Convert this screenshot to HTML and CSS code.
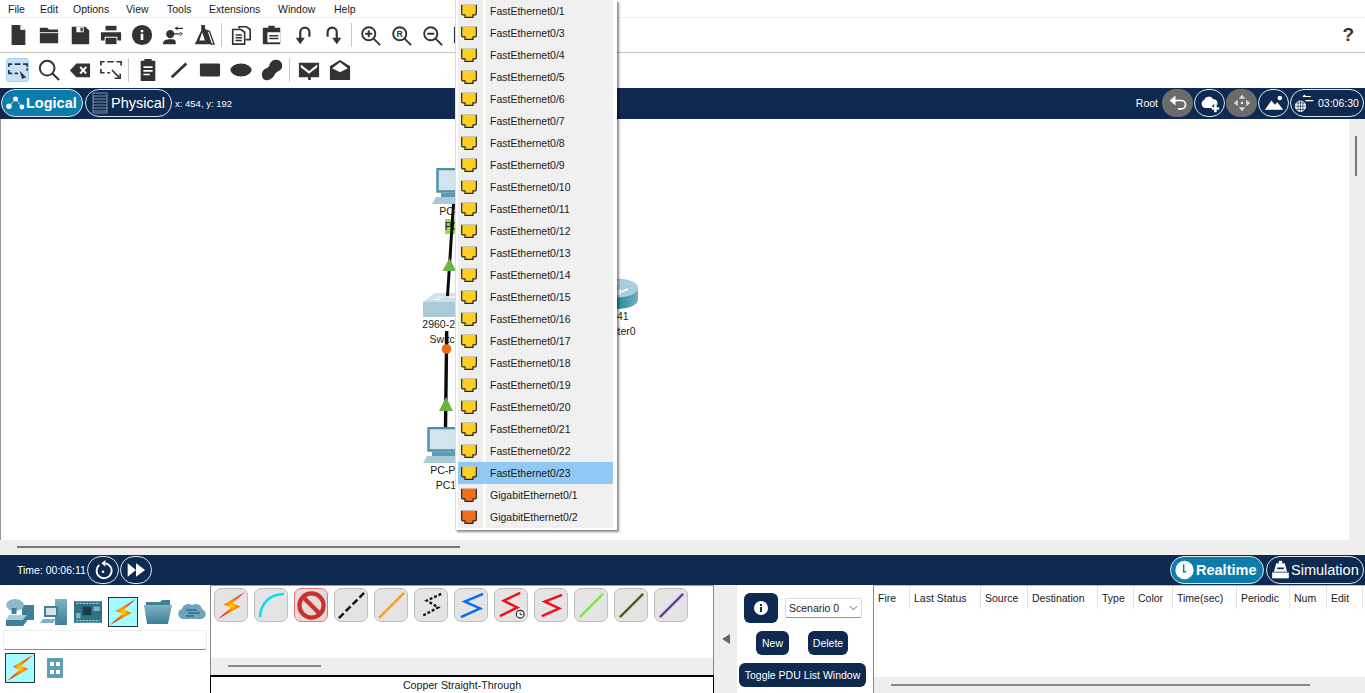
FILE: index.html
```html
<!DOCTYPE html>
<html lang="en">
<head>
    <meta charset="UTF-8">
    <meta name="viewport" content="width=device-width, initial-scale=1.0">
    <title>Cisco Packet Tracer</title>
    <link rel="stylesheet" href="styles.css">
</head>
<body>
    <svg class="defs" width="0" height="0">
        <defs>
            <radialGradient id="boltFill" cx="50%" cy="50%" r="50%">
                <stop offset="0%" stop-color="#ffd800"/>
                <stop offset="35%" stop-color="#ff8a00"/>
                <stop offset="100%" stop-color="#ee1c0c"/>
            </radialGradient>
            <linearGradient id="tealFill" x1="0" y1="0" x2="0" y2="1">
                <stop offset="0%" stop-color="#7fb2c4"/>
                <stop offset="100%" stop-color="#3f7f98"/>
            </linearGradient>
            <linearGradient id="routerFill" x1="0" y1="0" x2="1" y2="0">
                <stop offset="0%" stop-color="#9cc4d2"/>
                <stop offset="55%" stop-color="#2f8da0"/>
                <stop offset="100%" stop-color="#6fb0bf"/>
            </linearGradient>
            <symbol id="port" viewBox="0 0 16 14">
                <path d="M.7 0V9.800Q.7 10.800 1.700 10.800H4V13.300H12V10.800H14.300Q15.300 10.800 15.300 9.800V0Z" fill="currentColor" stroke="#2a2418" stroke-width="1.200"/>
                <path d="M0 0H16V.8H0Z" fill="#d8d8d8"/>
            </symbol>
            <symbol id="bolt" viewBox="0 0 30 30">
                <path d="M29 1 7 14 14.500 17 1 29 24 16 16 12.500Z" fill="url(#boltFill)"/>
            </symbol>
            <symbol id="pc" viewBox="0 0 46 36">
                <path d="M5.500 1H42.500V23.500H5.500Z" fill="#d4e4ec" stroke="#4f8ea8" stroke-width="2.400"/>
                <path d="M9 25H39V29H9Z" fill="#5b9ab0"/>
                <path d="M4 29H42L46 36H0Z" fill="#a9cbd8"/>
            </symbol>
        </defs>
    </svg>

    <div class="app">
        <nav class="menubar">
            <span>File</span><span>Edit</span><span>Options</span><span>View</span>
            <span>Tools</span><span>Extensions</span><span>Window</span><span>Help</span>
        </nav>

        <div class="toolbar toolbar-main">
            <button class="tool"><svg viewBox="0 0 24 24"><path d="M5 1H15L20 6V23H5Z"/><path d="M15 1V6H20" fill="#fff" stroke="#fff" stroke-width=".8"/></svg></button>
            <button class="tool"><svg viewBox="0 0 24 24"><path d="M2 4H10L12 6H22V9H2Z"/><path d="M2 10H22V21H2Z"/></svg></button>
            <button class="tool"><svg viewBox="0 0 24 24"><path d="M3 3H18L22 7V22H3Z"/><path d="M8 3H16V9H8Z" fill="#fff"/><path d="M12.500 4H15V8H12.500Z"/></svg></button>
            <button class="tool"><svg viewBox="0 0 24 24"><path d="M6 2H18V7H6Z"/><path d="M1 9H23V18H19V14H5V18H1Z"/><path d="M6 15H18V22H6Z"/></svg></button>
            <button class="tool"><svg viewBox="0 0 24 24"><circle cx="12" cy="12" r="11"/><path d="M10.600 6.500H13.400V9H10.600ZM10.600 10.500H13.400V17.500H10.600Z" fill="#fff"/></svg></button>
            <button class="tool"><svg viewBox="0 0 24 24"><circle cx="9" cy="11" r="4.500"/><path d="M1 22C1 17 5 16.500 9 16.500S15 17 15 20V22Z"/><path d="M14 4H23V5.500H14ZM14 4.700 17 2.500V7ZM13 10H21V11.500H13ZM23 10.700 19.500 8.500V13Z"/></svg></button>
            <button class="tool"><svg viewBox="0 0 24 24"><path d="M9 1H13V4L21 22H2L9 7Z"/><path d="M10 9 7 18H13Z" fill="#fff"/><path d="M15 7 18 8 23 22H20Z" fill="#fff" stroke="#333" stroke-width="1.400"/></svg></button>
            <span class="sep"></span>
            <button class="tool"><svg viewBox="0 0 24 24" fill="none" stroke="#333" stroke-width="1.800"><path d="M10 5V3H18L22 6V17H17"/><path d="M3 6H12L16 9V22H3Z" fill="#fff"/><path d="M6 12H13M6 15H13M6 18H13"/></svg></button>
            <button class="tool"><svg viewBox="0 0 24 24"><path d="M2 4H8V2H15V4H21V22H2Z"/><path d="M7 9H21V20H7Z" fill="#fff"/><path d="M9 12H19V13.500H9ZM9 15H19V16.500H9Z"/></svg></button>
            <button class="tool"><svg viewBox="0 0 24 24" fill="none" stroke="#333" stroke-width="2.400"><path d="M19 14V9A5 5 0 0 0 9 9V17"/><path d="M4 15 9 22 14 15Z" fill="#333" stroke="none"/></svg></button>
            <button class="tool"><svg viewBox="0 0 24 24" fill="none" stroke="#333" stroke-width="2.400"><path d="M5 14V9A5 5 0 0 1 15 9V17"/><path d="M10 15 15 22 20 15Z" fill="#333" stroke="none"/></svg></button>
            <span class="sep"></span>
            <button class="tool tool-zoom"><svg viewBox="0 0 24 24" fill="none" stroke="#333" stroke-width="2.200"><circle cx="10" cy="10" r="7.500"/><path d="M15.500 15.500 23 23M6 10H14M10 6V14"/></svg></button>
            <button class="tool tool-zoom"><svg viewBox="0 0 24 24" fill="none" stroke="#333" stroke-width="2.200"><circle cx="10" cy="10" r="7.500"/><path d="M15.500 15.500 23 23"/><text x="10" y="13.500" text-anchor="middle" class="icon-letter">R</text></svg></button>
            <button class="tool tool-zoom"><svg viewBox="0 0 24 24" fill="none" stroke="#333" stroke-width="2.200"><circle cx="10" cy="10" r="7.500"/><path d="M15.500 15.500 23 23M6 10H14"/></svg></button>
            <button class="tool"><svg viewBox="0 0 24 24"><path d="M1 3H9V21H1Z"/></svg></button>
            <span class="help">?</span>
        </div>

        <div class="toolbar toolbar-edit">
            <button class="tool tool-on"><svg viewBox="0 0 24 24" fill="none" stroke="#333" stroke-width="2"><path d="M1 8V5H5M8 5H15M18 5H23V8M1 12V16H5M8 16H12"/><path d="M14 13 22 21 19 21.500 17 23Z" fill="#333" stroke="none"/><path d="M23 10V13"/></svg></button>
            <button class="tool"><svg viewBox="0 0 24 24" fill="none" stroke="#333" stroke-width="2.200"><circle cx="10" cy="10" r="8"/><path d="M15.500 15.500 23 23"/></svg></button>
            <button class="tool"><svg viewBox="0 0 24 24"><path d="M8 5H23V20H8L1 12.500Z"/><path d="M11.500 9.500 13 8 15.500 10.700 18 8 19.500 9.500 17 12.300 19.500 15 18 16.500 15.500 14 13 16.500 11.500 15 14 12.300Z" fill="#fff"/></svg></button>
            <button class="tool"><svg viewBox="0 0 24 24" fill="none" stroke="#333" stroke-width="1.800"><path d="M1 7V3H5M8 3H15M18 3H23V7M1 11V15H5M8 15H11"/><path d="M13 12 21 20"/><path d="M16 21H22V16"/></svg></button>
            <span class="sep"></span>
            <button class="tool"><svg viewBox="0 0 24 24"><path d="M4 2H8V0H16V2H20V24H4Z"/><path d="M7 8H17V9.800H7ZM7 12H17V13.800H7ZM7 16H14V17.800H7Z" fill="#fff"/></svg></button>
            <button class="tool"><svg viewBox="0 0 24 24" fill="none" stroke="#333" stroke-width="3"><path d="M4 20 20 5"/></svg></button>
            <button class="tool"><svg viewBox="0 0 24 24"><rect x="1" y="5" width="22" height="14" rx="1.500"/></svg></button>
            <button class="tool"><svg viewBox="0 0 24 24"><ellipse cx="12" cy="12" rx="11.500" ry="7"/></svg></button>
            <button class="tool"><svg viewBox="0 0 24 24"><path d="M15 1C20 0 24 4 23 9 22 13 17 13 15 17 13 21 9 24 5 23 1 22 0 17 2 13 4 10 8 10 9 7 10 4 12 1 15 1Z"/></svg></button>
            <span class="sep"></span>
            <button class="tool"><svg viewBox="0 0 24 24"><path d="M1 4H23V20H14V23H11V20H1Z"/><path d="M3 6 12 13 21 6 21 9 12 16 3 9Z" fill="#fff"/></svg></button>
            <button class="tool"><svg viewBox="0 0 24 24"><path d="M12 1 23 8V23H1V8Z"/><path d="M3.500 10 12 3.500 20.500 10 12 14.500Z" fill="#fff"/></svg></button>
        </div>

        <div class="navbar navbar-top">
            <button class="pill pill-active pill-logical">
                <svg viewBox="0 0 26 20" class="pill-icon"><path d="M5 14 13 5 21 15" fill="none" stroke="#cfe6f1" stroke-width="1.200"/><circle cx="13" cy="5" r="3" fill="#fff"/><circle cx="5" cy="14" r="3.400" fill="#fff"/><circle cx="21" cy="15" r="3" fill="#fff"/></svg>
                <b>Logical</b>
            </button>
            <button class="pill pill-physical">
                <svg viewBox="0 0 16 22" class="rack-icon"><path d="M1 1H15V21H1ZM1 4H15M1 7H15M1 10H15M1 13H15M1 16H15M1 19H15" fill="none" stroke="#7f8fa8"/></svg>
                <span>Physical</span>
            </button>
            <span class="coords">x: 454, y: 192</span>
            <span class="root-label">Root</span>
            <button class="round round-gray"><svg viewBox="0 0 24 24" fill="none" stroke="#fff" stroke-width="2"><path d="M7 9H16A5 5 0 0 1 16 19H12"/><path d="M9 3 2 9 9 15Z" fill="#fff" stroke="none"/></svg></button>
            <button class="round round-line"><svg viewBox="0 0 24 24"><path d="M6 18A5 5 0 0 1 5 8.500 6 6 0 0 1 16 7.500 5 5 0 0 1 21 12V14H15V18Z" fill="#fff"/><path d="M17 14H20V17H23V20H20V23H17V20H14V17H17Z" fill="#fff"/></svg></button>
            <button class="round round-gray"><svg viewBox="0 0 24 24" fill="#d8d8d8"><path d="M12 2 16 7H8ZM12 22 8 17H16ZM2 12 7 8V16ZM22 12 17 16V8Z"/><circle cx="12" cy="12" r="1.400" fill="#fff"/></svg></button>
            <button class="round round-line"><svg viewBox="0 0 24 24" fill="#fff"><path d="M1 20 9 9 13 14 16 11 23 20Z"/><circle cx="19" cy="6" r="2.800"/></svg></button>
            <button class="pill pill-clock">
                <svg viewBox="0 0 26 24" class="clock-icon" fill="none" stroke="#fff"><circle cx="8" cy="16" r="6.500" fill="#fff"/><path d="M1.500 16H14.500M8 9.500V22.500M3 12H13M3 20H13M5 10.500V21.500M11 10.500V21.500" stroke="#0f2a50" stroke-width=".8"/><path d="M11 4H21M11 4 14 2M14 9H24" stroke-width="1.400"/></svg>
                <span>03:06:30</span>
            </button>
        </div>

        <div class="workspace">
            <div class="stage-row">
                <div class="stage">
                    <div class="node node-pc0">
                        <svg class="node-icon" viewBox="0 0 46 36"><use href="#pc"/></svg>
                        <span>PC-PT</span>
                        <span class="node-mark">PC0</span>
                    </div>
                    <div class="node node-switch">
                        <svg class="node-icon" viewBox="0 0 50 24"><path d="M12 0H50L38 9H0Z" fill="#cfe0e7"/><path d="M0 9H38V24H0Z" fill="#a9cbd8"/><path d="M38 9 50 0V13L38 24Z" fill="#7aa9bb"/><path d="M14 4H21M26 4H33M10 6.500H17" stroke="#fff"/></svg>
                        <span>2960-24TT</span>
                        <span>Switch0</span>
                    </div>
                    <div class="node node-router">
                        <svg class="node-icon" viewBox="0 0 44 31"><path d="M1 10V22C1 27 11 31 22 31S43 27 43 22V10Z" fill="url(#routerFill)"/><ellipse cx="22" cy="10" rx="21" ry="9.500" fill="#a9cdd9"/><path d="M11 9 20 5M18 3 23 5 18 8M33 11 24 15M26 12 21 14 26 17" stroke="#fff" stroke-width="1.400" fill="none"/></svg>
                        <span>1941</span>
                        <span>Router0</span>
                    </div>
                    <div class="node node-pc1">
                        <svg class="node-icon" viewBox="0 0 46 36"><use href="#pc"/></svg>
                        <span>PC-PT</span>
                        <span>PC1</span>
                    </div>

                    <!-- cables run over the node labels -->
                    <svg class="links" width="1348" height="421" viewBox="0 119 1348 421">
                        <path d="M453.500 204 447.500 296" stroke="#0a0a0a" stroke-width="3" fill="none"/>
                        <path d="M446.700 331 445.500 427" stroke="#0a0a0a" stroke-width="3.400" fill="none"/>
                        <path d="M449.500 258 456 271H442.500Z" fill="#6cb33f"/>
                        <path d="M446 397 453 411H439Z" fill="#6cb33f"/>
                        <circle cx="446.500" cy="349" r="4.800" fill="#f26a16"/>
                    </svg>
                </div>
                <div class="vscroll"><i></i></div>
            </div>
            <div class="hscroll"><i></i></div>
        </div>

        <div class="navbar navbar-bottom">
            <span class="time">Time: 00:06:11</span>
            <button class="round round-line"><svg viewBox="0 0 24 24" fill="none" stroke="#fff" stroke-width="2.200"><path d="M7.500 6A9 9 0 1 0 15 4"/><path d="M15 0 10 4 15 8Z" fill="#fff" stroke="none"/><circle cx="12" cy="14" r="1.500" fill="#fff" stroke="none"/></svg></button>
            <button class="round round-line"><svg viewBox="0 0 24 24" fill="#fff"><path d="M2 4 12 12 2 20ZM12 4 23 12 12 20Z"/></svg></button>
            <button class="pill pill-active pill-realtime">
                <svg viewBox="0 0 24 24" class="pill-icon"><circle cx="12" cy="12" r="11" fill="#fff"/><path d="M11 5V14H14" fill="none" stroke="#0b7cab" stroke-width="1.800"/></svg>
                <b>Realtime</b>
            </button>
            <button class="pill pill-sim">
                <svg viewBox="0 0 24 24" class="pill-icon"><path d="M7 4H17L20 14H4Z" fill="#fff"/><path d="M10 1H14V4H10Z" fill="#fff"/><path d="M2 15H22V22H2Z" fill="#fff"/><path d="M8 9H16V11H8Z" fill="#0f2a50"/></svg>
                <span>Simulation</span>
            </button>
        </div>

        <div class="dock">
            <section class="devices">
                <div class="categories">
                    <svg class="cat" viewBox="0 0 28 28"><path d="M16 7H28V22H16Z" fill="#3f7f98"/><ellipse cx="9" cy="7" rx="9" ry="6" fill="#8fb9c8"/><path d="M3 17H21L17 22H0Z" fill="#a9cbd8"/><path d="M0 22H17V28H0ZM17 22 21 17V23L17 28Z" fill="#3f7f98"/><path d="M8 10V16" stroke="#3f7f98" stroke-width="5"/></svg>
                    <svg class="cat" viewBox="0 0 28 28"><path d="M15 1H27V27H15Z" fill="url(#tealFill)"/><path d="M4 8H18V19H4Z" fill="#3f7f98"/><path d="M6 10H16V17H6Z" fill="#d4e4ec"/><path d="M3 21H16L13 25H0Z" fill="#7fb2c4"/></svg>
                    <svg class="cat" viewBox="0 0 26 26"><path d="M0 3H26V23H0Z" fill="#2f7188"/><path d="M8 8H16V16H8Z" fill="#1d3c4a"/><path d="M2 5H24M2 21H24" stroke="#a5ccd9" stroke-dasharray="2 1"/><path d="M18 8H24V12H18ZM2 14H6V19H2Z" fill="#7fb2c4"/></svg>
                    <span class="cat-on"><svg viewBox="0 0 30 30"><use href="#bolt"/></svg></span>
                    <svg class="cat" viewBox="0 0 28 28"><path d="M2 4H16L18 2H26V8H2Z" fill="#3f7f98"/><path d="M0 7H28L24 26H3Z" fill="url(#tealFill)"/></svg>
                    <svg class="cat" viewBox="0 0 28 28"><path d="M4 21C-1 19 -1 12 4 11 5 6 11 5 14 7 18 5 23 6 24 11 29 13 29 19 24 21Z" fill="#6ea4b9"/><path d="M8 12H19M10 15H22M8 18H16" stroke="#2f7188" stroke-width="1.400"/></svg>
                </div>
                <div class="device-search"></div>
                <div class="subcats">
                    <span class="cat-on"><svg viewBox="0 0 30 30"><use href="#bolt"/></svg></span>
                    <svg class="grid-icon" viewBox="0 0 16 20"><rect width="16" height="20" rx="1" fill="#5f9db5"/><path d="M3 4H7V8H3ZM9 4H13V8H9ZM3 12H7V16H3ZM9 12H13V16H9Z" fill="#fff"/></svg>
                </div>
            </section>

            <section class="connections">
                <div class="cable-list">
                    <button class="cable"><svg viewBox="0 0 30 30"><use href="#bolt"/></svg></button>
                    <button class="cable"><svg viewBox="0 0 30 30"><path d="M3 27C4 13 13 3 28 3" fill="none" stroke="#12d8f2" stroke-width="2.600"/></svg></button>
                    <button class="cable cable-stop"><svg viewBox="0 0 30 30" fill="none" stroke="#cb2f2f" stroke-width="4.400"><circle cx="15" cy="15" r="12.500"/><path d="M6 6 24 24"/></svg></button>
                    <button class="cable"><svg viewBox="0 0 30 30"><path d="M2 28 28 2" stroke="#111" stroke-width="2.600" stroke-dasharray="7 3"/></svg></button>
                    <button class="cable"><svg viewBox="0 0 30 30"><path d="M2 28 28 2" stroke="#ff9f0f" stroke-width="2.600"/></svg></button>
                    <button class="cable"><svg viewBox="0 0 30 30" fill="none" stroke="#111" stroke-width="2.400" stroke-dasharray="3 2"><path d="M25 3 10 10 22 17 5 26"/></svg></button>
                    <button class="cable"><svg viewBox="0 0 30 30" fill="none" stroke="#0a6cf2" stroke-width="2.600"><path d="M27 3 8 11 24 18 4 27"/></svg></button>
                    <button class="cable"><svg viewBox="0 0 30 30" fill="none" stroke="#f2101c" stroke-width="2.600"><path d="M24 2 7 10 21 17 3 26"/><circle cx="24" cy="24" r="4" stroke="#222" stroke-width="1.200" fill="#fff"/><path d="M24 22V24.500H26" stroke="#222" stroke-width="1"/></svg></button>
                    <button class="cable"><svg viewBox="0 0 30 30" fill="none" stroke="#f2101c" stroke-width="2.600"><path d="M26 4 8 11 23 18 5 26"/></svg></button>
                    <button class="cable"><svg viewBox="0 0 30 30"><path d="M3 27 27 3" stroke="#6fee3c" stroke-width="2.600"/></svg></button>
                    <button class="cable"><svg viewBox="0 0 30 30"><path d="M3 27 27 3" stroke="#5f5a10" stroke-width="2.600"/></svg></button>
                    <button class="cable"><svg viewBox="0 0 30 30"><path d="M3 27 27 3" stroke="#6a3aa8" stroke-width="2.600"/></svg></button>
                </div>
                <div class="cable-scroll"><i></i></div>
                <div class="cable-name">Copper Straight-Through</div>
            </section>

            <div class="collapse"><i></i></div>

            <section class="scenario">
                <div class="scenario-top">
                    <button class="btn-info"><svg viewBox="0 0 14 14"><circle cx="7" cy="7" r="7" fill="#fff"/><path d="M6 3H8V5H6ZM6 6H8V11H6Z" fill="#0f2a50"/></svg></button>
                    <div class="scenario-select">
                        <span>Scenario 0</span>
                        <svg viewBox="0 0 10 6"><path d="M1 1 5 5 9 1" fill="none" stroke="#555"/></svg>
                    </div>
                </div>
                <div class="scenario-actions">
                    <button class="btn-navy btn-new">New</button>
                    <button class="btn-navy btn-delete">Delete</button>
                </div>
                <button class="btn-navy btn-toggle">Toggle PDU List Window</button>
            </section>

            <section class="pdu-list">
                <div class="pdu-head">
                    <span>Fire</span>
                    <span>Last Status</span>
                    <span>Source</span>
                    <span>Destination</span>
                    <span>Type</span>
                    <span>Color</span>
                    <span>Time(sec)</span>
                    <span>Periodic</span>
                    <span>Num</span>
                    <span>Edit</span>
                </div>
                <div class="pdu-body"></div>
                <div class="pdu-scroll"><i></i></div>
            </section>
        </div>

        <!-- open port menu, lies over the toolbars and the canvas -->
        <ul class="port-menu">
            <li><svg><use href="#port"/></svg>FastEthernet0/1</li>
            <li><svg><use href="#port"/></svg>FastEthernet0/3</li>
            <li><svg><use href="#port"/></svg>FastEthernet0/4</li>
            <li><svg><use href="#port"/></svg>FastEthernet0/5</li>
            <li><svg><use href="#port"/></svg>FastEthernet0/6</li>
            <li><svg><use href="#port"/></svg>FastEthernet0/7</li>
            <li><svg><use href="#port"/></svg>FastEthernet0/8</li>
            <li><svg><use href="#port"/></svg>FastEthernet0/9</li>
            <li><svg><use href="#port"/></svg>FastEthernet0/10</li>
            <li><svg><use href="#port"/></svg>FastEthernet0/11</li>
            <li><svg><use href="#port"/></svg>FastEthernet0/12</li>
            <li><svg><use href="#port"/></svg>FastEthernet0/13</li>
            <li><svg><use href="#port"/></svg>FastEthernet0/14</li>
            <li><svg><use href="#port"/></svg>FastEthernet0/15</li>
            <li><svg><use href="#port"/></svg>FastEthernet0/16</li>
            <li><svg><use href="#port"/></svg>FastEthernet0/17</li>
            <li><svg><use href="#port"/></svg>FastEthernet0/18</li>
            <li><svg><use href="#port"/></svg>FastEthernet0/19</li>
            <li><svg><use href="#port"/></svg>FastEthernet0/20</li>
            <li><svg><use href="#port"/></svg>FastEthernet0/21</li>
            <li><svg><use href="#port"/></svg>FastEthernet0/22</li>
            <li class="hover"><svg><use href="#port"/></svg>FastEthernet0/23</li>
            <li class="giga"><svg><use href="#port"/></svg>GigabitEthernet0/1</li>
            <li class="giga"><svg><use href="#port"/></svg>GigabitEthernet0/2</li>
        </ul>
    </div>
</body>
</html>
```

FILE: styles.css
```css
* {
    box-sizing: border-box;
}
body {
    margin: 0;
    background: #fff;
    font-family: 'Liberation Sans', Arial, sans-serif;
    font-size: 11px;
    color: #1a1a1a;
    overflow: hidden;
}
button {
    padding: 0;
    border: none;
    background: none;
    font: inherit;
    color: inherit;
}
.defs {
    position: absolute;
}
.app {
    position: relative;
    display: flex;
    flex-direction: column;
    width: 1365px;
    height: 693px;
    overflow: hidden;
}

/* menu and toolbars */
.menubar {
    display: grid;
    flex: none;
    grid-template-columns: 32px 33px 53px 41px 42px 69px 56px auto;
    align-items: center;
    height: 18px;
    padding-left: 8px;
    border-bottom: 1px solid #eee;
    font-size: 10.5px;
}
.toolbar {
    display: flex;
    flex: none;
    align-items: center;
    height: 35px;
    padding-left: 2px;
}
.toolbar-main {
    border-bottom: 1px solid #c4c4c4;
}
.toolbar-edit {
    padding-bottom: 1px;
}
.tool {
    display: flex;
    flex: none;
    align-items: center;
    justify-content: center;
    width: 31px;
    height: 24px;
}
.tool svg {
    width: 22px;
    height: 22px;
}
.tool svg:not([fill]) {
    fill: #333;
}
.tool-zoom svg {
    width: 21px;
    height: 21px;
}
.tool-on svg {
    width: 20px;
}
.tool-on {
    width: 23px;
    margin: 0 4px;
    background: #c5e1f9;
    border: 1px solid #a9d0f0;
    border-radius: 3px;
}
.icon-letter {
    font-family: 'Liberation Sans', Arial, sans-serif;
    font-size: 10px;
    font-weight: bold;
    fill: #333;
    stroke: none;
}
.sep {
    flex: none;
    width: 6px;
    height: 24px;
    background: linear-gradient(#c8c8c8, #c8c8c8) 2px 0 / 1px 100% no-repeat;
}
.help {
    margin-left: auto;
    margin-right: 11px;
    font-size: 19px;
    font-weight: bold;
    color: #333;
}

/* navy bars */
.navbar {
    display: flex;
    flex: none;
    align-items: center;
    background: #0f2a50;
    color: #fff;
}
.navbar-top {
    height: 31px;
    padding: 0 1px 1px;
}
.navbar-bottom {
    height: 30px;
    padding: 0 1px 0 17px;
}
.pill {
    display: flex;
    flex: none;
    align-items: center;
    height: 28px;
    border: 1px solid #dfe5ec;
    border-radius: 14px;
    color: #fff;
}
.pill-active {
    background: #0b7cab;
}
.pill-active b {
    font-size: 14.5px;
}
.pill-logical {
    width: 82px;
    padding-left: 3px;
}
.pill-physical {
    width: 87px;
    margin-left: 2px;
    padding-left: 6px;
    font-size: 14.5px;
}
.pill-icon {
    flex: none;
    width: 21px;
    height: 20px;
}
.rack-icon {
    width: 16px;
    height: 22px;
    margin-right: 3px;
}
.coords {
    margin-left: 3px;
    font-size: 9.5px;
}
.root-label {
    margin-left: auto;
    margin-right: 4px;
    font-size: 10.5px;
}
.round {
    display: flex;
    flex: none;
    align-items: center;
    justify-content: center;
    width: 31px;
    height: 28px;
    margin-right: 1px;
    border-radius: 14px;
}
.round svg {
    width: 20px;
    height: 20px;
}
.round-gray {
    background: #6b6b6b;
}
.round-line {
    border: 1px solid #dfe5ec;
}
.pill-clock {
    width: 74px;
    padding-left: 3px;
    font-size: 10.5px;
}
.clock-icon {
    flex: none;
    width: 21px;
    height: 20px;
    margin-right: 3px;
}

/* logical workspace */
.workspace {
    display: flex;
    flex: 1;
    flex-direction: column;
    min-height: 0;
}
.stage-row {
    display: flex;
    flex: 1;
    min-height: 0;
}
.stage {
    position: relative;
    flex: 1;
    border-left: 1px solid #999;
}
.links {
    position: absolute;
    left: -1px;
    top: 0;
}
.node {
    position: absolute;
    display: flex;
    flex-direction: column;
    align-items: center;
    width: 80px;
    line-height: 15px;
    font-size: 10.5px;
}
.node-icon {
    flex: none;
}
.node-pc0 {
    left: 414px;
    top: 49px;
}
.node-pc0 .node-icon,
.node-pc1 .node-icon {
    width: 46px;
    height: 36px;
}
.node-mark {
    background: #9ed85a;
}
.node-switch {
    left: 407px;
    top: 174px;
}
.node-switch .node-icon {
    width: 50px;
    height: 24px;
}
.node-router {
    left: 576px;
    top: 159px;
}
.node-router .node-icon {
    width: 44px;
    height: 31px;
}
.node-pc1 {
    left: 405px;
    top: 308px;
}
.vscroll {
    flex: none;
    width: 16px;
    padding-top: 17px;
    background: #eee;
}
.vscroll i {
    display: block;
    width: 2px;
    height: 40px;
    margin-left: 6px;
    background: #777;
}
.hscroll {
    flex: none;
    height: 15px;
    padding: 6px 0 0 17px;
    background: #eee;
}
.hscroll i {
    display: block;
    width: 443px;
    height: 2px;
    background: #777;
}

/* bottom nav */
.time {
    width: 70px;
    font-size: 10.5px;
}
.navbar-bottom .round {
    width: 32px;
    height: 28px;
    margin-right: 0;
}
.navbar-bottom .round:first-of-type {
    margin-right: 1px;
}
.pill-realtime {
    width: 94px;
    margin-left: auto;
    padding-left: 3px;
}
.pill-realtime b {
    margin-left: 1px;
}
.pill-sim {
    width: 98px;
    margin-left: 2px;
    padding-left: 3px;
    font-size: 14.5px;
}

/* dock */
.dock {
    display: flex;
    flex: none;
    height: 108px;
}
.devices {
    flex: none;
    width: 210px;
    padding: 11px 3px 0 3px;
}
.categories {
    display: flex;
    align-items: center;
    gap: 6px;
    height: 32px;
    padding-left: 3px;
}
.cat {
    flex: none;
    width: 28px;
    height: 28px;
}
.cat-on {
    display: block;
    flex: none;
    width: 30px;
    height: 30px;
    background: #a3fcff;
    border: 1px solid #1e3a4a;
}
.cat-on svg {
    display: block;
    width: 28px;
    height: 28px;
}
.device-search {
    height: 20px;
    margin-top: 2px;
    background: #fff;
    border: 1px solid #eee;
    border-bottom: 1px solid #888;
    border-radius: 3px;
}
.subcats {
    display: flex;
    align-items: center;
    gap: 12px;
    margin-top: 3px;
    padding-left: 2px;
}
.grid-icon {
    width: 16px;
    height: 20px;
}
.connections {
    display: flex;
    flex: none;
    flex-direction: column;
    width: 504px;
    border-top: 1px solid #999;
    border-left: 1px solid #888;
    border-right: 1px solid #888;
}
.cable-list {
    display: flex;
    flex: 1;
    gap: 6px;
    padding: 2px 0 0 3px;
}
.cable {
    display: flex;
    flex: none;
    align-items: center;
    justify-content: center;
    width: 34px;
    height: 34px;
    background: #e4e4e4;
    border: 1px solid #bdbdbd;
    border-radius: 7px;
}
.cable svg {
    width: 29px;
    height: 29px;
}
.cable-stop {
    background: #e8d8d8;
    border-color: #d77;
}
.cable-scroll {
    flex: none;
    height: 17px;
    padding: 7px 0 0 17px;
    background: #eee;
}
.cable-scroll i {
    display: block;
    width: 93px;
    height: 2px;
    background: #888;
}
.cable-name {
    flex: none;
    height: 18px;
    margin: 0 -1px;
    border: 1px solid #000;
    border-bottom: none;
    border-top-width: 2px;
    background: #fff;
    text-align: center;
    line-height: 17px;
    font-size: 10.7px;
}
.collapse {
    display: flex;
    flex: none;
    align-items: center;
    justify-content: center;
    width: 23px;
    background: #eee;
}
.collapse i {
    display: block;
    border: 5px solid transparent;
    border-right: 8px solid #666;
    border-left: none;
}
.scenario {
    display: flex;
    flex: none;
    flex-direction: column;
    width: 136px;
    padding: 8px 0 0 2px;
}
.scenario-top {
    display: flex;
    align-items: center;
    gap: 7px;
    padding-left: 5px;
}
.btn-info {
    display: flex;
    align-items: center;
    justify-content: center;
    width: 34px;
    height: 30px;
    background: #0f2a50;
    border-radius: 6px;
}
.btn-info svg {
    width: 14px;
    height: 14px;
}
.scenario-select {
    display: flex;
    align-items: center;
    justify-content: space-between;
    width: 77px;
    height: 20px;
    padding: 0 3px;
    border: 1px solid #ddd;
    border-bottom-color: #999;
    border-radius: 2px;
    font-size: 10.5px;
}
.scenario-select svg {
    width: 9px;
    height: 6px;
}
.btn-navy {
    background: #0f2a50;
    border-radius: 6px;
    color: #fff;
    font-size: 10.5px;
}
.scenario-actions {
    display: flex;
    gap: 19px;
    margin-top: 8px;
    padding-left: 17px;
}
.btn-new {
    width: 33px;
    height: 24px;
}
.btn-delete {
    width: 40px;
    height: 24px;
}
.btn-toggle {
    width: 127px;
    height: 24px;
    margin-top: 8px;
}
.pdu-list {
    display: flex;
    flex: 1;
    flex-direction: column;
    border-left: 1px solid #888;
    border-top: 1px solid #bbb;
}
.pdu-head {
    display: grid;
    flex: none;
    grid-template-columns: 36px 71px 47px 70px 36px 39px 64px 53px 37px 36px;
    height: 23px;
    font-size: 10.5px;
}
.pdu-head span {
    padding: 6px 0 0 4px;
    border-right: 1px solid #e4e4e4;
}
.pdu-body {
    flex: 1;
}
.pdu-scroll {
    flex: none;
    height: 16px;
    padding: 7px 0 0 17px;
    background: #eee;
}
.pdu-scroll i {
    display: block;
    width: 419px;
    height: 2px;
    background: #888;
}

/* port menu */
.port-menu {
    position: absolute;
    left: 455px;
    top: 0;
    width: 162px;
    margin: 0;
    padding: 0 4px 2px 2px;
    list-style: none;
    background: #fff;
    border-left: 1px solid #ddd;
    box-shadow: 2px 2px 2px rgba(0, 0, 0, 0.45);
}
.port-menu li {
    display: flex;
    align-items: center;
    height: 22px;
    padding-left: 3px;
    font-size: 10.5px;
    background: linear-gradient(90deg, #eee 25px, #fff 25px, #fff 28px, #f0f0f0 28px);
}
.port-menu li svg {
    flex: none;
    width: 16px;
    height: 14px;
    margin-right: 13px;
    color: #fccf20;
}
.port-menu li.hover {
    background: #90c8f6;
}
.port-menu li.giga svg {
    color: #f46d1d;
}
```
